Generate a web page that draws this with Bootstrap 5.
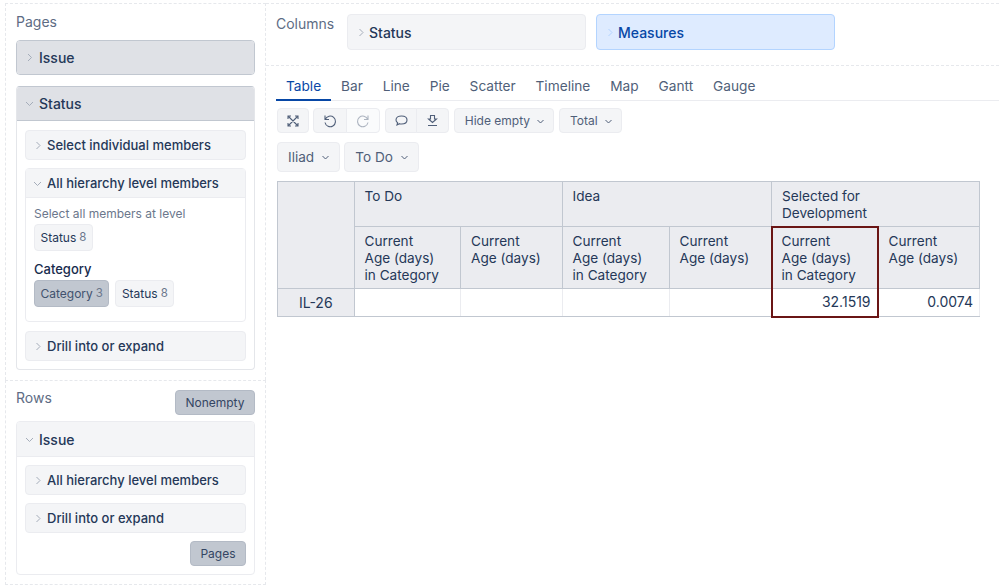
<!DOCTYPE html>
<html lang="en">
<head>
<meta charset="utf-8">
<title>Report</title>
<link rel="stylesheet" href="https://cdn.jsdelivr.net/npm/bootstrap@5.3.0/dist/css/bootstrap.min.css">
<style>
html,body{height:100%;overflow:hidden}
body{font-family:Inter,"Liberation Sans",sans-serif;font-size:14px;color:#253858;background:#fff}
.rb-root{width:999px;height:586px}
.rb-left{width:266px;padding:3px 0 0 5px;flex:none}
.rb-zone{border:1px dashed #e6e8ec;padding:9px 10px 10px}
.rb-pages{height:377px;border-bottom:0}
.rb-rows{height:205px}
.rb-label{color:#5e6c84;font-size:14px;line-height:17px;font-weight:400}
.rb-pagetitle{margin-bottom:10px}
.rb-rowshead{height:31px}
.rb-rows .rb-label{margin-top:-1px}
.rb-dim{border:1px solid #dfe1e6;border-radius:4px;overflow:hidden;margin-bottom:11px;background:#fff}
.rb-dimhead{height:34px;background:#dfe1e6;display:flex;align-items:center;font-size:14px;font-weight:500;color:#253858;border-bottom:1px solid #c1c7d0;padding-left:6px;gap:3px}
.rb-dim.rb-solo{border-color:#c1c7d0;height:35px}
.rb-dim.rb-solo .rb-dimhead{border-bottom:0;height:33px}
.rb-dim.rb-open{border-color:#c1c7d0 #e4e6ea #e4e6ea}
.rb-dim.rb-light{border-color:#ebecf0;margin:0;height:154px}
.rb-dim.rb-light .rb-dimhead{background:#f4f5f7;border-bottom-color:#ebecf0;height:35px}
.rb-dimbody{padding:9px 8px 8px}
.rb-light .rb-dimbody{padding-top:8px}
.rb-sub{background:#f4f5f7;border:1px solid #ebecf0;border-radius:4px;height:30px;display:flex;align-items:center;font-size:13px;font-weight:500;color:#253858;margin-bottom:8px;padding:1px 0 0 7px;gap:3px;overflow:hidden}
.rb-openbox{border:1px solid #ebecf0;border-radius:4px;margin-bottom:9px;height:154px}
.rb-openbox .rb-sub{border:0;border-bottom:1px solid #ebecf0;border-radius:0;margin:0;height:29px;padding-left:6px;gap:4px}
.rb-openbody{padding:8px}
.rb-hint{font-size:12px;line-height:16px;color:#6b778c;margin-bottom:2px}
.rb-chip{display:inline-flex;align-items:center;height:27px;padding:0 5.500px;background:#f4f5f7;border:1px solid #ebecf0;border-radius:4px;font-size:12px;color:#253858;gap:3px}
.rb-chip span{color:#6b778c;font-size:11.500px}
.rb-chip.rb-on{background:#c1c7d0;border-color:#b3bac5;color:#42526e}
.rb-cat{font-size:13px;font-weight:500;line-height:16px;color:#172b4d;margin:10px 0 3px}
.rb-chips{gap:6px}
.rb-grey{background:#c1c7d0;border:1px solid #b3bac5;border-radius:4px;color:#344563;font-size:12px;line-height:16px;padding:4px 9.500px 3px;height:25px}
.rb-right{flex:1;min-width:0;padding-top:3px}
.rb-cols{height:63px;padding:10px 0 0 10px;gap:12px;border-style:dashed;border-color:#e6e8ec;border-width:1px 0}
.rb-cols .rb-label{width:59px;margin-top:1px}
.rb-col{width:239px;height:36px;border-radius:4px;display:flex;align-items:center;gap:2px;padding-left:8px;font-size:14px;font-weight:500;background:#f4f5f7;border:1px solid #ebecf0;margin-right:-2px}
.rb-col.rb-blue{background:#deebff;border-color:#b3d4ff;color:#0747a6}
.rb-tabs{margin:4px 0 0 10px;height:31px;border-bottom:1.500px solid #ebecf0;flex-wrap:nowrap}
.rb-tabs .nav-link{padding:7px 9.950px 4px;font-size:13.700px;line-height:19px;color:#505f79;border:0;border-radius:0;margin:0;height:31px;background:none}
.rb-tabs .nav-link.active{color:#0747a6;border-bottom:2px solid #0747a6}
.rb-bar{margin:7px 0 0 11px;gap:4px}
.rb-barrow{gap:5px}
.rb-bar2{margin-top:9px}
.rb-tb{background:#f4f5f7;border:1px solid #ebecf0;color:#505f79;font-size:12px;line-height:16px;padding:1px 8px 0 10px;height:25px;border-radius:4px;display:inline-flex;align-items:center;gap:6px}
.rb-tb:hover{background:#f4f5f7;color:#505f79;border-color:#ebecf0}
.rb-bar .rb-icon{padding:0 9px}
.rb-bar .rb-note .rb-icon{padding:0 8.700px}
.rb-expand{margin-right:-1px}
.rb-bar .rb-tall{height:30px;font-size:13.600px;padding:0 9px 0 10px;gap:7px}
.rb-fade{background:#fafbfc}
.rb-fade svg{opacity:.45}
.rb-grid{width:702px;margin:9px 0 0 11px;table-layout:fixed;border-collapse:collapse;font-size:13.600px;line-height:17px;color:#253858}
.rb-grid th,.rb-grid td{border:1px solid #c1c7d0;padding:6px 10px 2px;font-weight:400;vertical-align:top}
.rb-grid th{background:#ebecf0}
.rb-grid td{background:#fff;border-color:#ebecf0;border-bottom-color:#c1c7d0;text-align:right;padding:3px 6px 5px;height:28px;vertical-align:middle;font-size:14px}
.rb-grid .rb-rowh{text-align:center;padding:5px;vertical-align:middle;background:#ebecf0;border-color:#c1c7d0;font-size:14px}
.rb-grid th.rb-mark{border:2px solid #6a1515;border-bottom:1px solid #c1c7d0;padding:5px 9px 2px}
.rb-grid td.rb-mark{border:2px solid #6a1515;border-top:1px solid #c1c7d0}
.rb-ic{flex:none;display:block}
</style>
</head>
<body>
<div class="rb-root d-flex">
  <div class="rb-left">
    <div class="rb-zone rb-pages">
      <div class="rb-label rb-pagetitle">Pages</div>
      <div class="rb-dim rb-solo"><div class="rb-dimhead"><svg class="rb-ic" width="13" height="13" viewBox="0 0 13 13" fill="none" stroke="#a5adba"><path d="M5 3l3.500 3.500L5 10"/></svg><span>Issue</span></div></div>
      <div class="rb-dim rb-open">
        <div class="rb-dimhead"><svg class="rb-ic" width="13" height="13" viewBox="0 0 13 13" fill="none" stroke="#a5adba"><path d="M3 5l3.500 3.500L10 5"/></svg><span>Status</span></div>
        <div class="rb-dimbody">
          <div class="rb-sub"><svg class="rb-ic" width="11" height="13" viewBox="0 0 11 13" fill="none" stroke="#a5adba"><path d="M3.500 3L7 6.500 3.500 10"/></svg>Select individual members</div>
          <div class="rb-openbox">
            <div class="rb-sub"><svg class="rb-ic" width="11" height="13" viewBox="0 0 11 13" fill="none" stroke="#a5adba"><path d="M2 5l3.500 3.500L9 5"/></svg>All hierarchy level members</div>
            <div class="rb-openbody">
              <div class="rb-hint">Select all members at level</div>
              <div class="rb-chip">Status <span>8</span></div>
              <div class="rb-cat">Category</div>
              <div class="d-flex rb-chips"><div class="rb-chip rb-on">Category <span>3</span></div><div class="rb-chip">Status <span>8</span></div></div>
            </div>
          </div>
          <div class="rb-sub mb-0"><svg class="rb-ic" width="11" height="13" viewBox="0 0 11 13" fill="none" stroke="#a5adba"><path d="M3.500 3L7 6.500 3.500 10"/></svg>Drill into or expand</div>
        </div>
      </div>
    </div>
    <div class="rb-zone rb-rows">
      <div class="d-flex justify-content-between align-items-start rb-rowshead"><div class="rb-label">Rows</div><button class="btn rb-grey">Nonempty</button></div>
      <div class="rb-dim rb-light">
        <div class="rb-dimhead"><svg class="rb-ic" width="13" height="13" viewBox="0 0 13 13" fill="none" stroke="#a5adba"><path d="M3 5l3.500 3.500L10 5"/></svg><span>Issue</span></div>
        <div class="rb-dimbody">
          <div class="rb-sub"><svg class="rb-ic" width="11" height="13" viewBox="0 0 11 13" fill="none" stroke="#a5adba"><path d="M3.500 3L7 6.500 3.500 10"/></svg>All hierarchy level members</div>
          <div class="rb-sub"><svg class="rb-ic" width="11" height="13" viewBox="0 0 11 13" fill="none" stroke="#a5adba"><path d="M3.500 3L7 6.500 3.500 10"/></svg>Drill into or expand</div>
          <div class="d-flex justify-content-end"><button class="btn rb-grey">Pages</button></div>
        </div>
      </div>
    </div>
  </div>
  <div class="rb-right">
    <div class="rb-cols d-flex align-items-start">
      <div class="rb-label">Columns</div>
      <div class="rb-col"><svg class="rb-ic" width="11" height="13" viewBox="0 0 11 13" fill="none" stroke="#a5adba"><path d="M3.500 3L7 6.500 3.500 10"/></svg>Status</div>
      <div class="rb-col rb-blue"><svg class="rb-ic" width="11" height="13" viewBox="0 0 11 13" fill="none" stroke="#b3d4ff"><path d="M3.500 3L7 6.500 3.500 10"/></svg>Measures</div>
    </div>
    <ul class="nav rb-tabs">
      <li class="nav-item"><a class="nav-link active" href="#">Table</a></li>
      <li class="nav-item"><a class="nav-link" href="#">Bar</a></li>
      <li class="nav-item"><a class="nav-link" href="#">Line</a></li>
      <li class="nav-item"><a class="nav-link" href="#">Pie</a></li>
      <li class="nav-item"><a class="nav-link" href="#">Scatter</a></li>
      <li class="nav-item"><a class="nav-link" href="#">Timeline</a></li>
      <li class="nav-item"><a class="nav-link" href="#">Map</a></li>
      <li class="nav-item"><a class="nav-link" href="#">Gantt</a></li>
      <li class="nav-item"><a class="nav-link" href="#">Gauge</a></li>
    </ul>
    <div class="rb-bar rb-barrow d-flex">
      <button class="btn rb-tb rb-icon rb-expand" aria-label="Full screen"><svg class="rb-ic" width="12" height="12" viewBox="0 0 12 12" fill="none" stroke="#505f79" stroke-width="1.100"><path d="M1 4V1h3M8 1h3v3M11 8v3H8M4 11H1V8M1.500 1.500l9 9M10.500 1.500l-9 9"/></svg></button>
      <div class="btn-group">
        <button class="btn rb-tb rb-icon" aria-label="Undo"><svg class="rb-ic" width="14" height="14" viewBox="0 0 14 14" fill="none" stroke="#505f79" stroke-width="1.100"><path d="M2 1.500v4h4M2.300 5.300A5.300 5.300 0 1 1 2 8.500"/></svg></button>
        <button class="btn rb-tb rb-icon rb-fade" aria-label="Redo"><svg class="rb-ic" width="14" height="14" viewBox="0 0 14 14" fill="none" stroke="#505f79" stroke-width="1.100"><path d="M12 1.500v4H8M11.700 5.300A5.300 5.300 0 1 0 12 8.500"/></svg></button>
      </div>
      <div class="btn-group rb-note">
        <button class="btn rb-tb rb-icon" aria-label="Comment"><svg class="rb-ic" width="13" height="13" viewBox="0 0 13 13" fill="none" stroke="#505f79" stroke-width="1.100"><path d="M1 6c0-2.500 2.500-4 5.500-4S12 3.500 12 6s-2.500 4-5.500 4c-.8 0-1.500-.1-2.100-.3L2 11l.6-2.300C1.600 8 1 7 1 6z"/></svg></button>
        <button class="btn rb-tb rb-icon" aria-label="Export"><svg class="rb-ic" width="13" height="13" viewBox="0 0 13 13" fill="none" stroke="#505f79" stroke-width="1.100"><path d="M4.500 1.500h4v3.500h2l-4 3.500-4-3.500h2zM2 11.500h9"/></svg></button>
      </div>
      <button class="btn rb-tb">Hide empty <svg class="rb-ic" width="9" height="9" viewBox="0 0 9 9" fill="none" stroke="#505f79"><path d="M1.500 3l3 3 3-3"/></svg></button>
      <button class="btn rb-tb">Total <svg class="rb-ic" width="9" height="9" viewBox="0 0 9 9" fill="none" stroke="#505f79"><path d="M1.500 3l3 3 3-3"/></svg></button>
    </div>
    <div class="rb-bar rb-bar2 d-flex">
      <button class="btn rb-tb rb-tall">Iliad <svg class="rb-ic" width="9" height="9" viewBox="0 0 9 9" fill="none" stroke="#505f79"><path d="M1.500 3l3 3 3-3"/></svg></button>
      <button class="btn rb-tb rb-tall">To Do <svg class="rb-ic" width="9" height="9" viewBox="0 0 9 9" fill="none" stroke="#505f79"><path d="M1.500 3l3 3 3-3"/></svg></button>
    </div>
    <table class="rb-grid">
      <colgroup><col style="width:76.500px"><col style="width:106.500px"><col style="width:101.500px"><col style="width:107px"><col style="width:102.500px"><col style="width:106px"><col style="width:102px"></colgroup>
      <thead>
        <tr style="height:45px"><th rowspan="2"></th><th colspan="2">To Do</th><th colspan="2">Idea</th><th colspan="2">Selected for<br>Development</th></tr>
        <tr style="height:62px"><th>Current<br>Age (days)<br>in Category</th><th>Current<br>Age (days)</th><th>Current<br>Age (days)<br>in Category</th><th>Current<br>Age (days)</th><th class="rb-mark">Current<br>Age (days)<br>in Category</th><th>Current<br>Age (days)</th></tr>
      </thead>
      <tbody>
        <tr><th class="rb-rowh">IL-26</th><td></td><td></td><td></td><td></td><td class="rb-mark">32.1519</td><td>0.0074</td></tr>
      </tbody>
    </table>
  </div>
</div>
<script src="https://cdn.jsdelivr.net/npm/bootstrap@5.3.0/dist/js/bootstrap.bundle.min.js"></script>
</body>
</html>
